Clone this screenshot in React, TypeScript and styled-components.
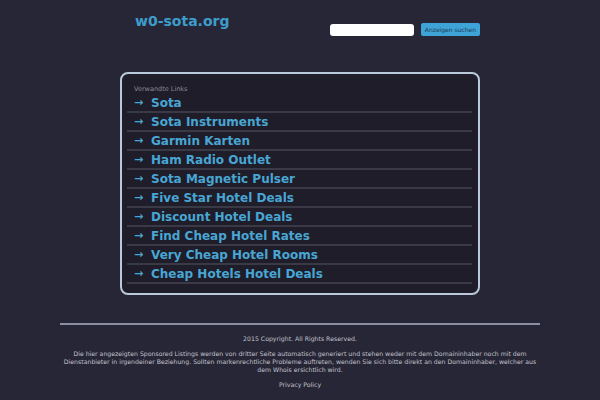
import React from "react";
import styled, { createGlobalStyle } from "styled-components";

const Global = createGlobalStyle`
  html, body { margin: 0; padding: 0; background: #272636; }
  body { font-family: "DejaVu Sans", sans-serif; }
`;

const Page = styled.div`
  width: 600px;
  height: 400px;
  background: #272636;
  overflow: hidden;
`;

const Header = styled.div`
  width: 360px;
  margin: 0 auto;
  height: 72px;
  display: flex;
  align-items: flex-start;
  justify-content: space-between;
`;

const Logo = styled.div`
  margin: 13px 0 0 15px;
  font-size: 14px;
  font-weight: bold;
  color: #3d9dcc;
`;

const Search = styled.form`
  display: flex;
  align-items: center;
  gap: 7px;
  margin-top: 23px;
`;

const Input = styled.div`
  width: 84px;
  height: 12px;
  background: #fff;
  border-radius: 3px;
`;

const Button = styled.div`
  height: 13px;
  padding: 0 4px;
  background: #3ea3d6;
  border-radius: 2px;
  font-size: 6px;
  line-height: 13px;
  color: #1e3a55;
`;

const Panel = styled.div`
  box-sizing: border-box;
  width: 360px;
  height: 223px;
  margin: 0 auto;
  border: 2px solid #b9c9d9;
  border-radius: 8px;
  background: #1e1d29;
  padding: 11px 6px 0 5px;
`;

const Caption = styled.div`
  font-size: 6.5px;
  color: #8b8b96;
  padding-left: 7px;
  height: 9px;
  line-height: 9px;
`;

const List = styled.ul`
  list-style: none;
  margin: 0;
  padding: 0;
`;

const Row = styled.li`
  height: 17px;
  border-bottom: 2px solid #3a3a47;
  display: flex;
  align-items: center;
  padding-left: 7px;
  font-size: 12px;
  font-weight: bold;
  color: #49a6d4;
`;

const Arrow = styled.span`
  width: 17px;
  font-size: 11px;
`;

const Footer = styled.div`
  width: 480px;
  margin: 28px auto 0;
  border-top: 2px solid #8c8ea1;
  text-align: center;
  font-size: 6.2px;
  color: #c2c2cc;
  line-height: 8px;
`;

const Copy = styled.p`
  margin: 10px 0 0;
`;

const Disclaimer = styled.p`
  margin: 7px 0 0;
`;

const Privacy = styled.p`
  margin: 7px 0 0;
`;

const links = [
  "Sota",
  "Sota Instruments",
  "Garmin Karten",
  "Ham Radio Outlet",
  "Sota Magnetic Pulser",
  "Five Star Hotel Deals",
  "Discount Hotel Deals",
  "Find Cheap Hotel Rates",
  "Very Cheap Hotel Rooms",
  "Cheap Hotels Hotel Deals",
];

export default function App() {
  return (
    <Page>
      <Global />
      <Header>
        <Logo>w0-sota.org</Logo>
        <Search>
          <Input />
          <Button>Anzeigen suchen</Button>
        </Search>
      </Header>
      <Panel>
        <Caption>Verwandte Links</Caption>
        <List>
          {links.map((l) => (
            <Row key={l}>
              <Arrow>→</Arrow>
              {l}
            </Row>
          ))}
        </List>
      </Panel>
      <Footer>
        <Copy>2015 Copyright. All Rights Reserved.</Copy>
        <Disclaimer>
          Die hier angezeigten Sponsored Listings werden von dritter Seite automatisch generiert und stehen weder mit dem Domaininhaber noch mit dem Dienstanbieter in irgendeiner Beziehung. Sollten markenrechtliche Probleme auftreten, wenden Sie sich bitte direkt an den Domaininhaber, welcher aus dem Whois ersichtlich wird.
        </Disclaimer>
        <Privacy>Privacy Policy</Privacy>
      </Footer>
    </Page>
  );
}
